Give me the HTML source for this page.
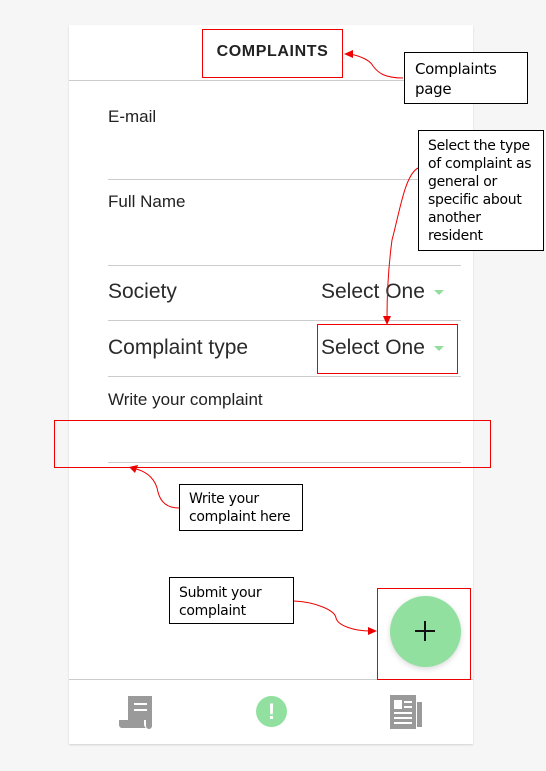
<!DOCTYPE html>
<html><head><style>
body{margin:0;width:546px;height:771px;background:#f6f6f6;position:relative;overflow:hidden;font-family:"Liberation Sans",sans-serif}
.a{position:absolute}
.card{left:69px;top:25px;width:404px;height:719px;background:#fff;box-shadow:0 1px 2px rgba(0,0,0,.15)}
.ln{position:absolute;height:1px;background:#ccc}
.lbl{position:absolute;color:#222;font-size:17px}
.big{font-size:21px;color:#2a2a2a}
.box{position:absolute;border:1px solid #000;background:#fff;font-family:"DejaVu Sans",sans-serif;font-size:14px;line-height:18px;color:#000;box-sizing:border-box;padding:5px 9px;letter-spacing:-0.3px}
.red{position:absolute;border:1px solid #e00;box-sizing:border-box}
.tri{display:inline-block;width:0;height:0;border-left:5px solid transparent;border-right:5px solid transparent;border-top:5px solid #90dd9c;vertical-align:middle;margin-left:9px}
</style></head><body>
<div class="a card"></div>
<div class="ln" style="left:69px;width:404px;top:80px"></div>
<div class="a" style="left:202px;width:141px;top:43px;text-align:center;font-weight:bold;font-size:16px;letter-spacing:0.6px;color:#222">COMPLAINTS</div>
<div class="lbl" style="left:108px;top:107px">E-mail</div>
<div class="ln" style="left:108px;width:353px;top:179px"></div>
<div class="lbl" style="left:108px;top:192px">Full Name</div>
<div class="ln" style="left:108px;width:353px;top:265px"></div>
<div class="lbl big" style="left:108px;top:280px">Society</div>
<div class="lbl big" style="left:321px;top:280px">Select One<span class="tri"></span></div>
<div class="ln" style="left:108px;width:353px;top:320px"></div>
<div class="lbl big" style="left:108px;top:336px">Complaint type</div>
<div class="lbl big" style="left:321px;top:336px">Select One<span class="tri"></span></div>
<div class="ln" style="left:108px;width:353px;top:376px"></div>
<div class="lbl" style="left:108px;top:390px">Write your complaint</div>
<div class="ln" style="left:108px;width:353px;top:462px"></div>
<div class="a" style="left:390px;top:596px;width:71px;height:71px;border-radius:50%;background:#92e09f;box-shadow:0 2px 6px rgba(0,0,0,.15)"></div>
<div class="a" style="left:415px;top:630px;width:20px;height:2px;background:#111"></div>
<div class="a" style="left:424px;top:621px;width:2px;height:20px;background:#111"></div>
<div class="ln" style="left:69px;width:404px;top:679px"></div>
<svg class="a" style="left:118px;top:694px" width="38" height="36" viewBox="0 0 38 36"><path d="M10 2h24v30a3 3 0 0 1-6 0v-6H10z" fill="#9a9a9a"/><path d="M1 26h25v4a5 5 0 0 0 2 4H4a3 3 0 0 1-3-3z" fill="#9a9a9a"/><rect x="16" y="9" width="13" height="2" fill="#fff"/><rect x="16" y="15" width="13" height="2" fill="#fff"/></svg>
<div class="a" style="left:256px;top:696px;width:31px;height:31px;border-radius:50%;background:#92e09f;color:#fff;font-weight:bold;font-size:22px;text-align:center;line-height:31px">!</div>
<svg class="a" style="left:389px;top:694px" width="36" height="36" viewBox="0 0 36 36"><rect x="1" y="1" width="26" height="34" fill="#9a9a9a"/><rect x="28" y="8" width="5" height="25" fill="#9a9a9a"/><rect x="5" y="6" width="8" height="9" fill="#fff"/><rect x="15" y="7" width="8" height="2" fill="#fff"/><rect x="15" y="12" width="8" height="2" fill="#fff"/><rect x="5" y="18" width="18" height="2" fill="#fff"/><rect x="5" y="23" width="18" height="2" fill="#fff"/><rect x="5" y="28" width="18" height="2" fill="#fff"/></svg>
<svg class="a" style="left:0;top:0" width="546" height="771"><g fill="none" stroke="#e00" stroke-width="1"><path d="M403 78C385 78 378 73 373 66C370 60 360 56 350 54"/><path d="M418 168C405 175 400 210 392 240C388 270 387 300 387 318"/><path d="M179 508C165 508 160 500 158 492C156 480 148 472 136 469"/><path d="M294 601C315 602 335 610 336 618C338 626 355 631 370 631"/></g><g fill="#e00"><path d="M344 54l9-4v8z"/><path d="M387 325l-4-9h8z"/><path d="M129 467l9-2-3 8z"/><path d="M377 631l-9-4v8z"/></g></svg>
<div class="red" style="left:202px;top:29px;width:141px;height:49px"></div>
<div class="red" style="left:317px;top:324px;width:141px;height:50px"></div>
<div class="red" style="left:54px;top:420px;width:437px;height:48px"></div>
<div class="red" style="left:377px;top:588px;width:94px;height:92px"></div>
<div class="box" style="left:404px;top:52px;width:124px;height:52px;padding-left:10px;font-size:15px;line-height:20px;padding-top:6px">Complaints<br>page</div>
<div class="box" style="left:418px;top:130px;width:126px;height:121px;padding-top:6px">Select the type of complaint as general or specific about another resident</div>
<div class="box" style="left:179px;top:484px;width:124px;height:47px;padding-top:5px">Write your complaint here</div>
<div class="box" style="left:169px;top:577px;width:125px;height:47px;padding-top:6px">Submit your complaint</div>
</body></html>
